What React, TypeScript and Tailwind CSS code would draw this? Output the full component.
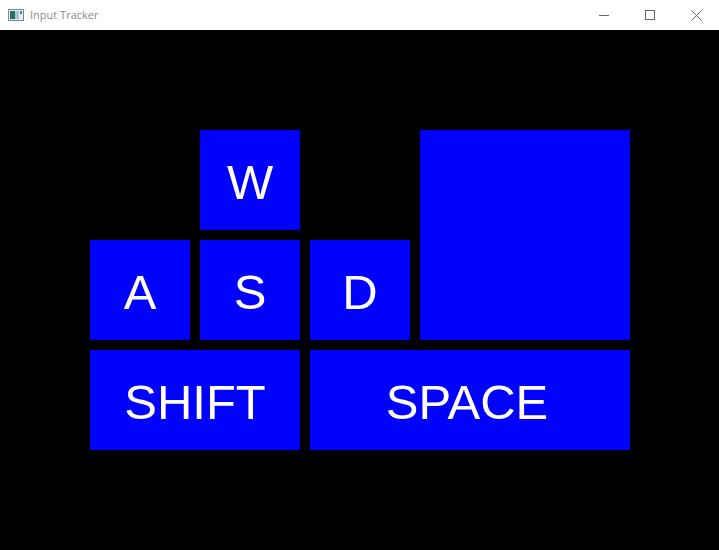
const keyClass =
  'bg-[#0000ff] text-white flex items-center justify-center text-[49px] leading-none pt-[4px]';

const App = () => {
  return (
    <div className="w-[719px] h-[550px] flex flex-col bg-black font-['Liberation_Sans',Arial,sans-serif]">
      {/* Title bar */}
      <div className="h-[30px] bg-white flex items-center shrink-0">
        <svg width="16" height="16" viewBox="0 0 16 16" className="ml-[8px]">
          <rect x="0.5" y="2.5" width="15" height="11" fill="#e8eef0" stroke="#7a8a90" />
          <rect x="2" y="4" width="5" height="8" fill="#2f6f5f" />
          <rect x="7" y="4" width="4" height="8" fill="#9cc8d8" />
          <rect x="12" y="4" width="2" height="3" fill="#5a7a86" />
        </svg>
        <span className="ml-[6px] pt-[1px] text-[11px] text-[#8c8c8c] font-['Open_Sans',sans-serif]">Input Tracker</span>
        <div className="ml-auto flex h-full">
          <div className="w-[46px] flex items-center justify-center">
            <svg width="10" height="10" viewBox="0 0 10 10">
              <path d="M0 5.5h10" stroke="#666" strokeWidth="1" />
            </svg>
          </div>
          <div className="w-[46px] flex items-center justify-center">
            <svg width="10" height="10" viewBox="0 0 10 10">
              <rect x="0.5" y="0.5" width="9" height="9" fill="none" stroke="#666" />
            </svg>
          </div>
          <div className="w-[46px] flex items-center justify-center">
            <svg width="11" height="11" viewBox="0 0 11 11">
              <path d="M0.5 0.5l10 10M10.5 0.5l-10 10" stroke="#666" strokeWidth="1" />
            </svg>
          </div>
        </div>
      </div>

      {/* Keys */}
      <div className="pt-[100px] pl-[90px]">
        <div className="grid grid-cols-[repeat(5,100px)] grid-rows-[repeat(3,100px)] gap-[10px]">
          <div className={`${keyClass} col-start-2 row-start-1`}>W</div>
          <div className="bg-[#0000ff] col-start-4 col-span-2 row-start-1 row-span-2" />
          <div className={`${keyClass} col-start-1 row-start-2`}>A</div>
          <div className={`${keyClass} col-start-2 row-start-2`}>S</div>
          <div className={`${keyClass} col-start-3 row-start-2`}>D</div>
          <div className={`${keyClass} col-start-1 col-span-2 row-start-3`}>SHIFT</div>
          <div className={`${keyClass} col-start-3 col-span-3 row-start-3 pr-[6px]`}>SPACE</div>
        </div>
      </div>
    </div>
  );
};

export default App;
